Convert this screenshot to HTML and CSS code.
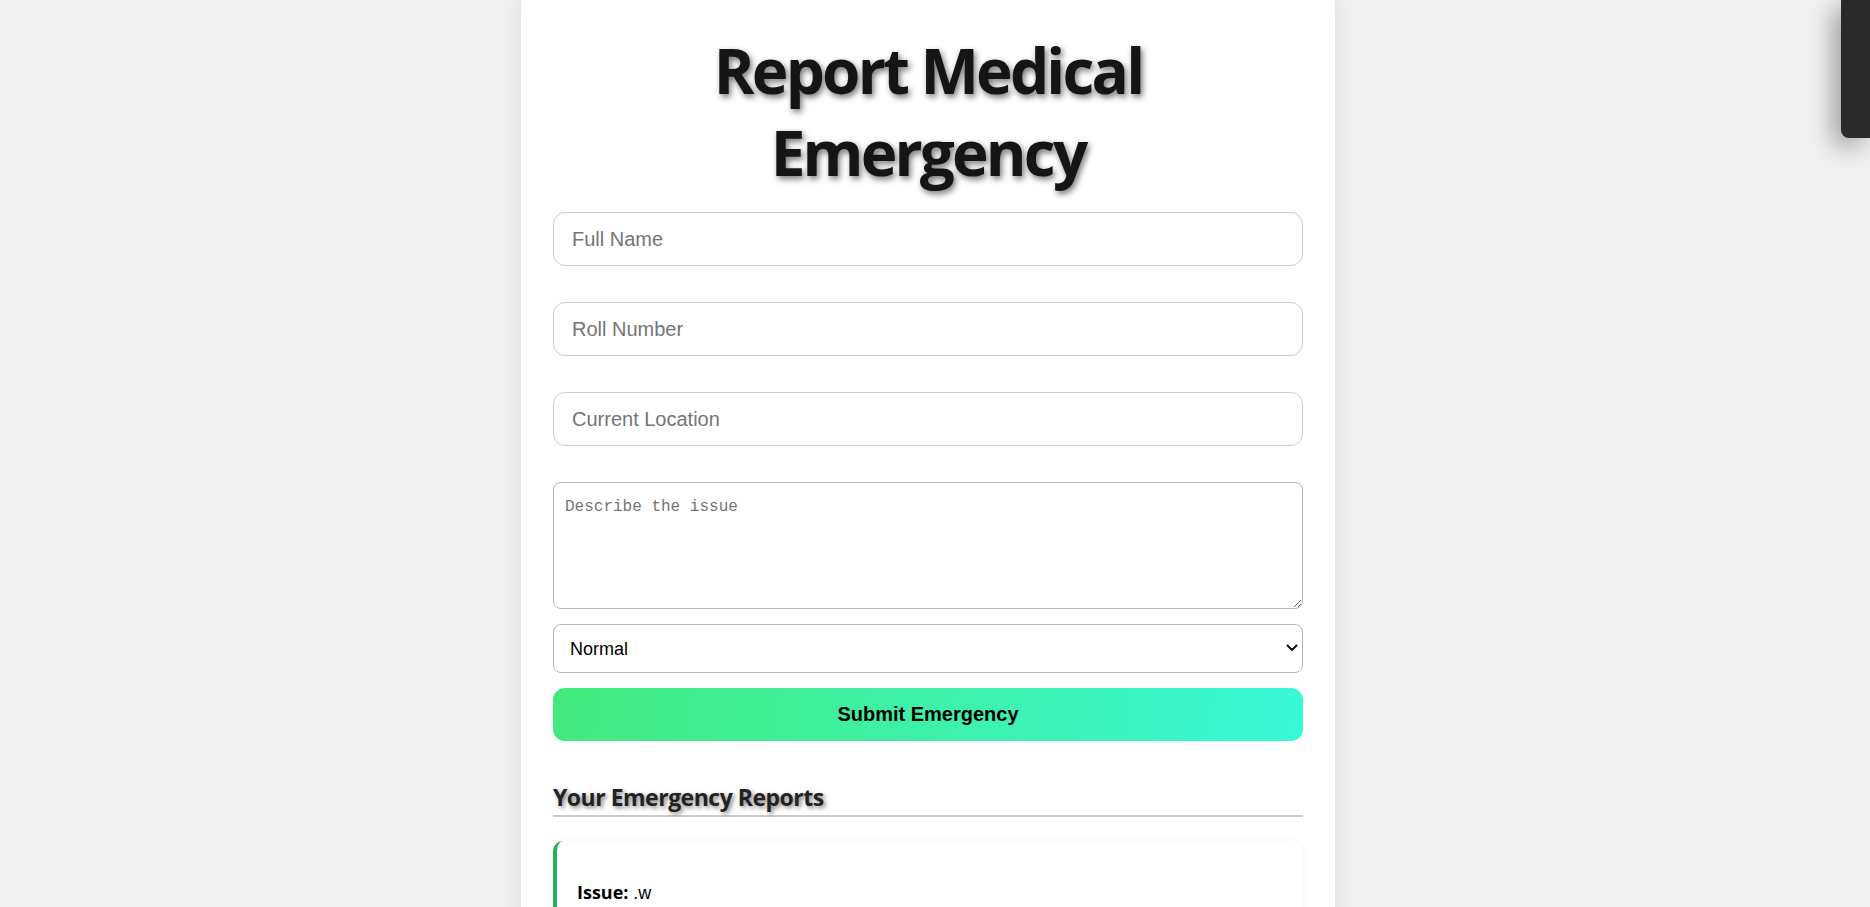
FILE: index.html
```html
<!DOCTYPE html>
<html lang="en">
<head>
<meta charset="utf-8">
<title>Report Medical Emergency</title>
<link rel="stylesheet" href="styles.css">
</head>
<body>
<main class="card">
  <h1 class="title">Report Medical Emergency</h1>
  <form class="form">
    <input class="field" type="text" placeholder="Full Name">
    <input class="field" type="text" placeholder="Roll Number">
    <input class="field" type="text" placeholder="Current Location">
    <textarea class="issue" placeholder="Describe the issue"></textarea>
    <div class="select-wrap">
      <select class="priority">
        <option>Normal</option>
        <option>Urgent</option>
        <option>Critical</option>
      </select>
      <svg class="chev" width="12" height="8" viewBox="0 0 12 8"><path d="M1.5 1.5 L6 6 L10.5 1.5" fill="none" stroke="#111" stroke-width="2" stroke-linecap="round" stroke-linejoin="round"/></svg>
    </div>
    <button class="submit" type="button">Submit Emergency</button>
  </form>
  <h3 class="reports-title">Your Emergency Reports</h3>
  <div class="report">
    <p class="report-line"><strong>Issue:</strong> <span class="val">.w</span></p>
  </div>
</main>
<div class="widget"></div>
</body>
</html>
```

FILE: styles.css
```css
html, body {
  margin: 0;
  padding: 0;
}
body {
  background: #f1f1f1;
  padding-right: 14px;
  font-family: "Open Sans", "Noto Sans", sans-serif;
  overflow: hidden;
  height: 907px;
}
.card {
  box-sizing: border-box;
  width: 814px;
  margin: 0 auto;
  background: #fff;
  padding: 29px 32px 40px;
  box-shadow: 0 0 22px rgba(0,0,0,0.09);
  min-height: 907px;
}
.title {
  margin: 0 0 19px;
  text-align: center;
  font-size: 62px;
  line-height: 82px;
  font-weight: 700;
  color: #151515;
  letter-spacing: -2.8px;
  text-shadow: 2px 3px 6px rgba(0,0,0,0.55);
  padding: 0 100px;
}
.form {
  display: flex;
  flex-direction: column;
}
.field {
  box-sizing: border-box;
  height: 54px;
  margin: 0 0 36px;
  padding: 0 18px;
  border: 1px solid #cccccc;
  border-radius: 12px;
  font-family: "Liberation Sans", Arial, sans-serif;
  font-size: 20px;
  color: #222;
  outline: none;
}
.field::placeholder { color: #757575; }
.issue {
  box-sizing: border-box;
  height: 127px;
  margin: 0 0 15px;
  padding: 15px 11px 11px;
  border: 1px solid #b5b5b5;
  border-radius: 8px;
  font-family: "Liberation Mono", monospace;
  font-size: 16px;
  color: #222;
  resize: vertical;
  outline: none;
}
.issue::placeholder { color: #757575; }
.select-wrap {
  position: relative;
  margin: 0 0 15px;
}
.priority {
  box-sizing: border-box;
  width: 100%;
  height: 49px;
  padding: 0 16px;
  border: 1px solid #b5b5b5;
  border-radius: 8px;
  background: #fff;
  font-family: "Liberation Sans", Arial, sans-serif;
  font-size: 18px;
  color: #000;
  -webkit-appearance: none;
  appearance: none;
  outline: none;
}
.chev {
  position: absolute;
  right: 5px;
  top: 20px;
  pointer-events: none;
}
.submit {
  height: 53px;
  border: none;
  border-radius: 12px;
  background: linear-gradient(100deg, #43e97b 0%, #38f9d7 100%);
  font-family: "Liberation Sans", Arial, sans-serif;
  font-weight: 700;
  font-size: 20px;
  color: #000;
  cursor: pointer;
}
.reports-title {
  margin: 40px 0 0;
  padding-bottom: 2px;
  border-bottom: 2px solid #cccccc;
  font-size: 23px;
  line-height: 32px;
  font-weight: 700;
  color: #222;
  letter-spacing: -0.5px;
  text-shadow: 2px 2px 4px rgba(0,0,0,0.5);
}
.report {
  margin-top: 24px;
  background: #fff;
  border-left: 4px solid #27ae60;
  border-radius: 10px;
  box-shadow: 0 2px 10px rgba(0,0,0,0.06);
  padding: 38px 20px 20px;
}
.report-line {
  margin: 0;
  font-size: 18px;
  line-height: 26px;
  color: #000;
}
.report-line strong {
  font-weight: 700;
}
.val {
  font-family: "Liberation Sans", Arial, sans-serif;
  font-size: 18px;
}
.widget {
  position: fixed;
  top: 0;
  right: 0;
  width: 29px;
  height: 138px;
  background: #2a2a2a;
  border-bottom-left-radius: 8px;
  box-shadow: -8px 8px 24px rgba(0,0,0,0.35);
}
```
